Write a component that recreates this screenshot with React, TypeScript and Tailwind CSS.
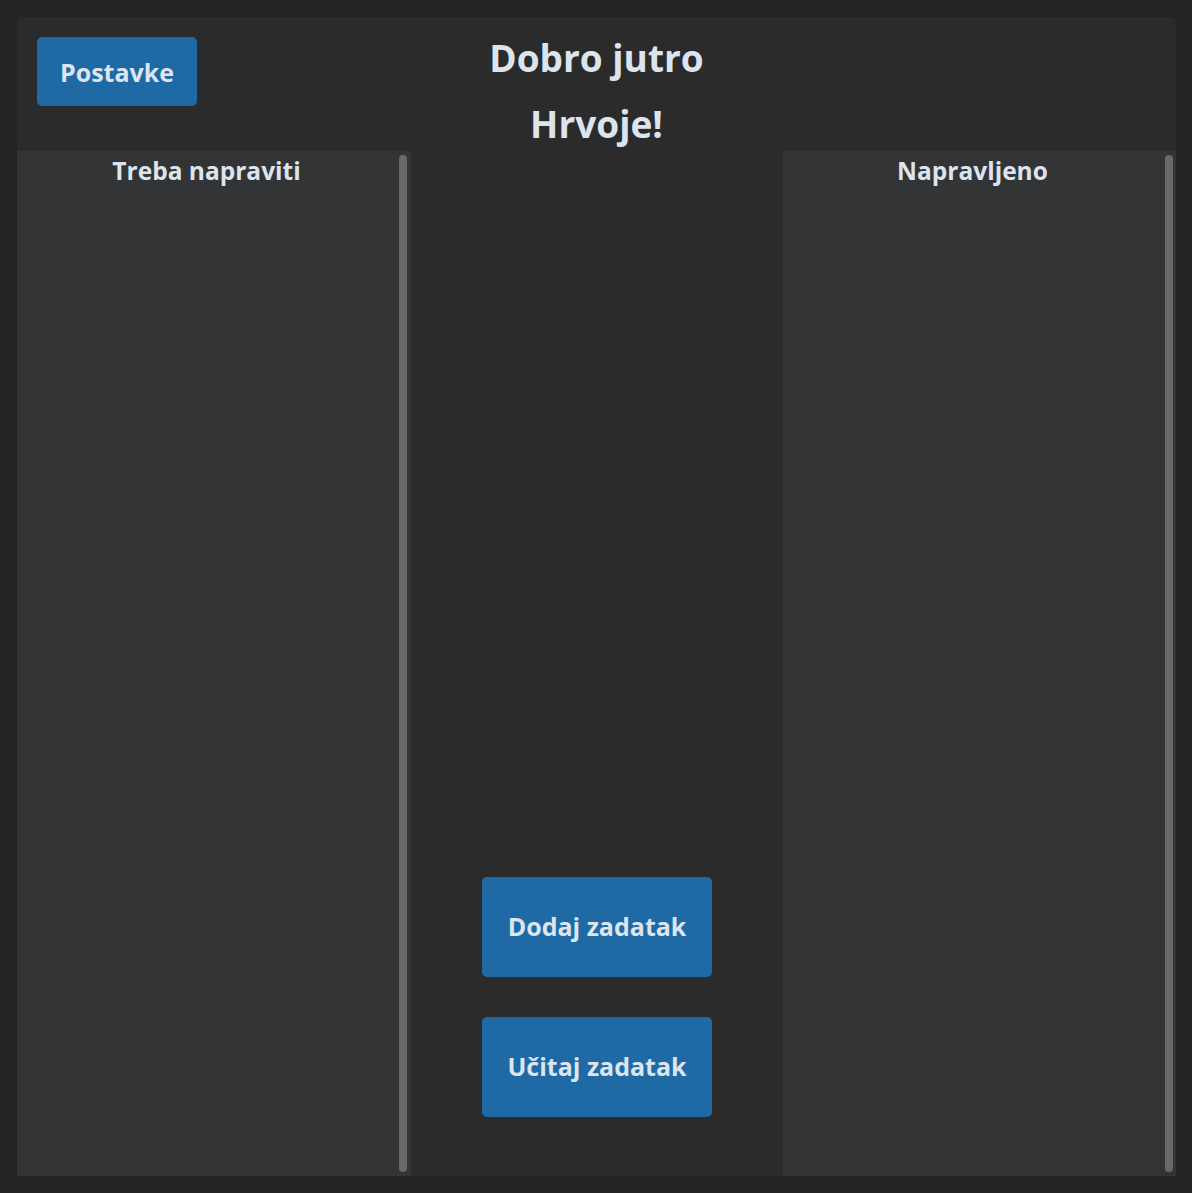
export default function App() {
  const font = { fontFamily: '"Open Sans", "Noto Sans", sans-serif' };
  return (
    <main className="min-h-screen bg-[#242424] pt-[17px] pb-[17px] pl-[17px] pr-[16px] select-none" style={font}>
      <div className="h-[1159px] flex flex-col bg-[#2b2b2b] rounded-t-[5px] overflow-hidden">
        {/* header */}
        <div className="h-[134px] grid grid-cols-[1fr_auto_1fr]">
          <div className="pt-[20px] pl-[20px]">
            <button className="w-[160px] h-[69px] pt-[2px] rounded-[5px] bg-[#1f6aa5] text-[#dce4ee] text-[25px] font-bold">
              Postavke
            </button>
          </div>
          <div className="flex flex-col items-center pt-[8px] text-[#dce4ee] text-[37px] font-bold">
            <h1 className="h-[66px] leading-[66px]">Dobro jutro</h1>
            <h1 className="h-[66px] leading-[66px]">Hrvoje!</h1>
          </div>
          <div />
        </div>

        {/* columns */}
        <div className="flex-1 flex">
          <section className="w-[394px] flex bg-[#333436]">
            <div className="flex-1">
              <h2 className="text-center text-[#dce4ee] text-[24.5px] font-bold leading-[40px]">Treba napraviti</h2>
            </div>
            <div className="w-[15px] pl-[3px] pr-[4px] py-[4px]">
              <div className="h-full rounded-full bg-[#696969]" />
            </div>
          </section>

          <div className="flex-1 flex flex-col items-center justify-end gap-[40px] pb-[59px]">
            <button className="w-[230px] h-[100px] rounded-[5px] bg-[#1f6aa5] text-[#dce4ee] text-[25px] font-bold">
              Dodaj zadatak
            </button>
            <button className="w-[230px] h-[100px] rounded-[5px] bg-[#1f6aa5] text-[#dce4ee] text-[25px] font-bold">
              Učitaj zadatak
            </button>
          </div>

          <section className="w-[393px] flex bg-[#333436]">
            <div className="flex-1">
              <h2 className="text-center text-[#dce4ee] text-[24.5px] font-bold leading-[40px]">Napravljeno</h2>
            </div>
            <div className="w-[14px] pl-[3px] pr-[3px] py-[4px]">
              <div className="h-full rounded-full bg-[#696969]" />
            </div>
          </section>
        </div>
      </div>
    </main>
  );
}
